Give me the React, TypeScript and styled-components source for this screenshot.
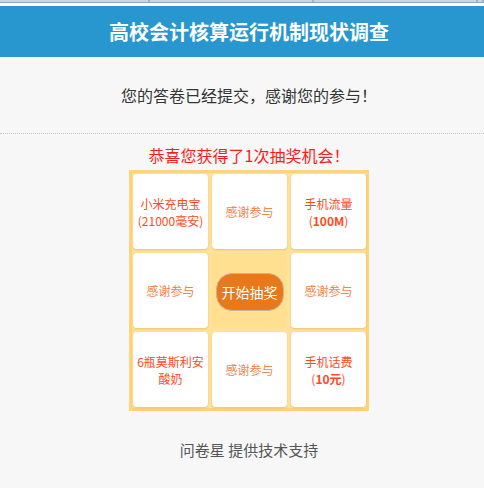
import React from "react";
import styled, { createGlobalStyle } from "styled-components";

const Global = createGlobalStyle`
  html, body { margin: 0; padding: 0; background: #f7f7f7; }
  body { font-family: "Microsoft YaHei", "Noto Sans CJK SC", "Liberation Sans", sans-serif; }
`;

const Page = styled.div`
  width: 484px;
  min-height: 488px;
  background: #f7f7f7;
  display: flex;
  flex-direction: column;
`;

const TabStrip = styled.div`
  display: flex;
  height: 3px;
  border-bottom: 3px solid #ffffff;
`;

const Tab = styled.div<{ $w: number }>`
  width: ${(p) => p.$w}px;
  flex-shrink: 0;
  background: #c6d6e6;
  border-bottom: 1px solid #8fa7bf;
  border-right: 2px solid #9fb4c8;
  box-sizing: border-box;
`;

const Header = styled.div`
  height: 51px;
  background: #2897d0;
  color: #fff;
  display: flex;
  align-items: center;
  justify-content: center;
  padding-left: 14px;
  font-size: 20px;
  font-weight: bold;
`;

const Body = styled.div`
  display: flex;
  flex-direction: column;
`;

const Thanks = styled.div`
  height: 76px;
  display: flex;
  align-items: center;
  justify-content: center;
  padding-left: 14px;
  font-size: 16px;
  color: #333;
  border-bottom: 1px dotted #c8c8c8;
`;

const Congrats = styled.div`
  margin-top: 10px;
  padding-left: 14px;
  text-align: center;
  font-size: 16px;
  color: #ff1a1a;
  line-height: 22px;
`;

const Board = styled.div`
  align-self: center;
  margin-top: 4px;
  margin-left: 14px;
  width: 240px;
  box-sizing: border-box;
  padding: 4px;
  background: #ffe29b;
  box-shadow: inset 0 0 0 3px #ffd27c;
  display: grid;
  grid-template-columns: repeat(3, 75px);
  grid-template-rows: repeat(3, 75px);
  gap: 4px;
`;

const Cell = styled.div<{ $strong?: boolean }>`
  background: #fff;
  border-radius: 4px;
  box-shadow: 0 1px 2px rgba(230, 160, 60, 0.5);
  display: flex;
  align-items: center;
  justify-content: center;
  text-align: center;
  font-size: 12px;
  line-height: 17px;
  padding: 0 2px;
  color: ${(p) => (p.$strong ? "#ff4a1a" : "#f5834a")};
`;

const Label = styled.span`
  display: block;
  b { font-weight: bold; }
`;

const Center = styled.div`
  background: #ffdf90;
  border-radius: 4px;
  display: flex;
  align-items: center;
  justify-content: center;
`;

const StartButton = styled.button`
  width: 68px;
  height: 38px;
  border-radius: 16px;
  border: 1px solid #c9b49a;
  background: #e8781a;
  color: #fff;
  font-size: 14px;
  font-family: inherit;
  padding: 0;
  margin-top: 2px;
`;

const Footer = styled.div`
  margin-top: 28px;
  padding-left: 14px;
  text-align: center;
  font-size: 15px;
  color: #555;
`;

export default function App() {
  return (
    <Page>
      <Global />
      <TabStrip>
        <Tab $w={150} />
        <Tab $w={164} />
        <Tab $w={164} />
        <Tab $w={6} />
      </TabStrip>
      <Header>高校会计核算运行机制现状调查</Header>
      <Body>
        <Thanks>您的答卷已经提交，感谢您的参与！</Thanks>
        <Congrats>恭喜您获得了1次抽奖机会！</Congrats>
        <Board>
          <Cell $strong><Label>小米充电宝<br />(21000毫安)</Label></Cell>
          <Cell><Label>感谢参与</Label></Cell>
          <Cell $strong><Label>手机流量<br />(<b>100M</b>)</Label></Cell>
          <Cell><Label>感谢参与</Label></Cell>
          <Center>
            <StartButton>开始抽奖</StartButton>
          </Center>
          <Cell><Label>感谢参与</Label></Cell>
          <Cell $strong><Label>6瓶莫斯利安<br />酸奶</Label></Cell>
          <Cell><Label>感谢参与</Label></Cell>
          <Cell $strong><Label>手机话费<br />(<b>10元</b>)</Label></Cell>
        </Board>
        <Footer>问卷星 提供技术支持</Footer>
      </Body>
    </Page>
  );
}
